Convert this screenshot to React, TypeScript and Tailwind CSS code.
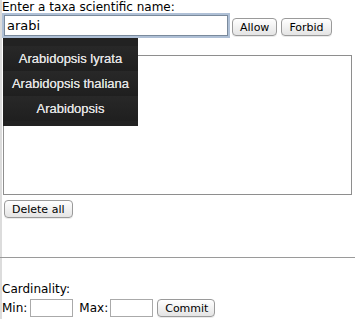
const btn =
  "h-[18px] rounded-[4px] border border-[#9a9a9a] bg-gradient-to-b from-white to-[#e4e4e4] px-[7px] text-[11px] leading-none text-black shadow-[0_1px_0_rgba(0,0,0,0.08)]";

const App = () => {
  const items = ["Arabidopsis lyrata", "Arabidopsis thaliana", "Arabidopsis"];
  return (
    <div className="relative min-h-[319px] w-[355px] border-l-2 border-[#dcdcdc] bg-white font-['DejaVu_Sans',sans-serif] text-[12px] leading-[15px] text-black">
      {/* search row */}
      <div>Enter a taxa scientific name:</div>
      <div className="flex items-center gap-[4px] pl-[2px]">
        <div className="relative">
          <input
            value="arabi"
            readOnly
            className="h-[21px] w-[224px] border border-[#7a8a9c] px-[2px] text-[13px] outline-none shadow-[0_0_0_2px_rgba(110,140,180,0.55)]"
          />
          {/* suggestions */}
          <div className="absolute left-[-1px] top-[23px] z-10 flex w-[135px] flex-col bg-[#222] pb-[5px] pt-[8px] font-['Liberation_Sans',sans-serif] text-[13px] text-[#e2e2e2] [text-shadow:0_0_0.4px_#e2e2e2]">
            {items.map((it) => (
              <div
                key={it}
                className="flex h-[25px] items-center justify-center bg-gradient-to-b from-[#282828] to-[#1f1f1f]"
              >
                {it}
              </div>
            ))}
          </div>
        </div>
        <div className="flex gap-[4px] pt-[3px]">
          <button className={btn}>Allow</button>
          <button className={btn}>Forbid</button>
        </div>
      </div>

      {/* list */}
      <div className="ml-[1px] mt-[19px] h-[140px] w-[349px] border border-[#8e8e8e]" />
      <div className="pl-[2px] pt-[5px]">
        <button className={btn}>Delete all</button>
      </div>

      <hr className="mt-[39px] ml-[-2px] w-[355px] border-t border-[#9a9a9a]" />

      {/* cardinality */}
      <div className="pt-[24px]">Cardinality:</div>
      <div className="flex items-center pt-[2px]">
        <span>Min:</span>
        <input readOnly className="ml-[3px] h-[18px] w-[43px] border border-[#aaa]" />
        <span className="ml-[6px]">Max:</span>
        <input readOnly className="ml-[2px] h-[18px] w-[43px] border border-[#aaa]" />
        <button className={`${btn} ml-[4px] w-[58px]`}>Commit</button>
      </div>
    </div>
  );
};

export default App;
